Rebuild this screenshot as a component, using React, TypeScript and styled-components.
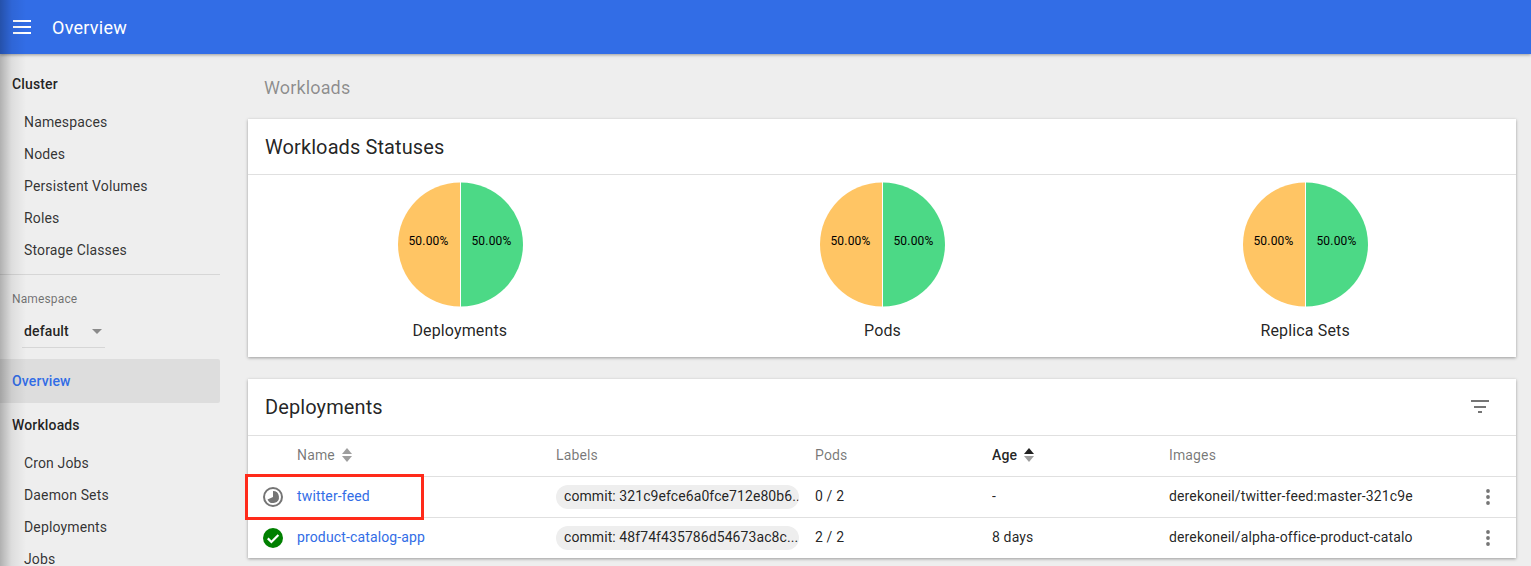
import React from 'react';
import styled, { createGlobalStyle } from 'styled-components';

const GlobalStyle = createGlobalStyle`
  html, body {
    margin: 0;
    height: 566px;
    overflow: hidden;
    background: #eee;
    font-family: Roboto, "Liberation Sans", sans-serif;
    color: rgba(0, 0, 0, 0.87);
    letter-spacing: 0.14px;
  }
`;

const Page = styled.div`
  position: relative;
  width: 1531px;
  height: 566px;
  overflow: hidden;
`;

const EdgeShade = styled.div`
  position: absolute;
  top: 0;
  left: 0;
  bottom: 0;
  width: 26px;
  background: linear-gradient(to right, rgba(0, 0, 0, 0.26), rgba(0, 0, 0, 0.07) 45%, rgba(0, 0, 0, 0));
  z-index: 5;
  pointer-events: none;
`;

const Toolbar = styled.header`
  position: relative;
  z-index: 2;
  height: 54px;
  display: flex;
  align-items: center;
  padding-left: 13px;
  gap: 19px;
  background: #326de6;
  color: #fff;
  box-shadow: 0 1px 3px rgba(0, 0, 0, 0.35);
  box-sizing: border-box;
`;

const ToolbarTitle = styled.div`
  font-size: 18px;
  letter-spacing: 0.25px;
`;

const Body = styled.div`
  display: flex;
`;

const Sidebar = styled.nav`
  width: 220px;
  flex: none;
  padding-top: 19px;
  font-size: 14px;
`;

const Heading = styled.div`
  height: 22px;
  line-height: 22px;
  padding-left: 12px;
  font-weight: 500;
  color: rgba(0, 0, 0, 0.87);
`;

const NavList = styled.div`
  margin-top: 11px;
`;

const NavItem = styled.div`
  height: 32px;
  line-height: 32px;
  padding-left: 24px;
  color: rgba(0, 0, 0, 0.8);
`;

const Divider = styled.div`
  height: 1px;
  margin-top: 8px;
  background: #d6d6d6;
`;

const NamespaceLabel = styled.div`
  margin-top: 17px;
  padding-left: 12px;
  height: 14px;
  line-height: 14px;
  font-size: 12px;
  color: rgba(0, 0, 0, 0.54);
`;

const NamespaceSelect = styled.div`
  margin: 9px 0 0 22px;
  width: 83px;
  height: 33px;
  display: flex;
  align-items: center;
  justify-content: space-between;
  padding: 0 2px;
  box-sizing: border-box;
  border-bottom: 1px solid #d6d6d6;
  font-weight: 500;
  font-size: 14px;
`;

const Caret = styled.span`
  width: 0;
  height: 0;
  margin-right: 1px;
  border-left: 5px solid transparent;
  border-right: 5px solid transparent;
  border-top: 5px solid #8a8a8a;
`;

const ActiveItem = styled.div`
  margin-top: 11px;
  height: 44px;
  line-height: 44px;
  padding-left: 12px;
  background: #ddd;
  border-radius: 0 2px 2px 0;
  font-weight: 500;
  color: #326de6;
`;

const WorkloadsHeading = styled(Heading)`
  margin-top: 11px;
`;

const Main = styled.main`
  flex: 1;
  padding: 0 15px 0 28px;
  min-width: 0;
`;

const SectionTitle = styled.div`
  height: 65px;
  padding: 23px 0 0 16px;
  box-sizing: border-box;
  font-size: 18px;
  line-height: 22px;
  color: rgba(0, 0, 0, 0.42);
`;

const Card = styled.section`
  background: #fff;
  box-shadow: 0 1px 3px rgba(0, 0, 0, 0.35);
  margin-bottom: 22px;
`;

const CardHeader = styled.div<{ $height: number }>`
  height: ${(p) => p.$height}px;
  display: flex;
  align-items: center;
  justify-content: space-between;
  padding: 0 26px 0 17px;
  box-sizing: border-box;
  border-bottom: 1px solid #e0e0e0;
  font-size: 20px;
  letter-spacing: 0.1px;
`;

const Charts = styled.div`
  height: 182px;
  display: grid;
  grid-template-columns: repeat(3, 1fr);
`;

const Chart = styled.div`
  display: flex;
  flex-direction: column;
  align-items: center;
  padding: 7px 0 0 2px;
`;

const PieLabel = styled.div`
  margin: 13px 1px 0 0;
  font-size: 16px;
  line-height: 19px;
`;

const PieText = styled.text`
  font-size: 12px;
  letter-spacing: 0.2px;
  fill: #000;
  text-anchor: middle;
  dominant-baseline: middle;
`;

const Row = styled.div`
  display: grid;
  grid-template-columns: 49px 259px 259px 177px 177px 1fr 46px;
  align-items: center;
  height: 41px;
  box-sizing: border-box;
  font-size: 14px;
  border-bottom: 1px solid #e0e0e0;
  &:last-child {
    border-bottom: 0;
    height: 40px;
  }
`;

const HeadCell = styled.div<{ $sorted?: boolean }>`
  display: flex;
  align-items: center;
  gap: 7px;
  margin-top: -2px;
  font-size: 14px;
  font-weight: ${(p) => (p.$sorted ? 500 : 400)};
  color: ${(p) => (p.$sorted ? 'rgba(0, 0, 0, 0.87)' : 'rgba(0, 0, 0, 0.54)')};
`;

const IconCell = styled.div`
  display: flex;
  justify-content: center;
  padding-left: 1px;
`;

const LinkCell = styled.a`
  margin-top: -2px;
  color: #326de6;
  text-decoration: none;
`;

const Cell = styled.div`
  margin-top: -2px;
  color: rgba(0, 0, 0, 0.87);
  white-space: nowrap;
  overflow: hidden;
`;

const Chip = styled.span`
  justify-self: start;
  width: 243px;
  height: 24px;
  line-height: 23px;
  padding: 0 0 0 8px;
  box-sizing: border-box;
  background: #eee;
  border-radius: 12px;
  font-size: 14px;
  letter-spacing: 0.08px;
  white-space: nowrap;
  overflow: hidden;
`;

const MenuCell = styled.div`
  display: flex;
  padding-left: 16px;
`;

const Highlight = styled.div`
  position: absolute;
  left: 245px;
  top: 474px;
  width: 179px;
  height: 46px;
  box-sizing: border-box;
  border: 3px solid #ff2a1a;
  pointer-events: none;
`;

const MenuIcon = () => (
  <svg width="20" height="14" viewBox="0 0 20 14" fill="#fff">
    <rect x="0" y="0" width="18" height="2" />
    <rect x="0" y="6" width="18" height="2" />
    <rect x="0" y="12" width="18" height="2" />
  </svg>
);

const FilterIcon = () => (
  <svg width="20" height="14" viewBox="0 0 20 14" fill="#757575">
    <rect x="1" y="0" width="18" height="2" />
    <rect x="4" y="6" width="12" height="2" />
    <rect x="8" y="11" width="4" height="2" />
  </svg>
);

const SortIcon = ({ up }: { up?: boolean }) => (
  <svg width="10" height="14" viewBox="0 0 10 14">
    <path d="M5 0 L10 6 H0 Z" fill={up ? '#212121' : '#9e9e9e'} />
    <path d="M5 14 L0 8 H10 Z" fill="#9e9e9e" />
  </svg>
);

const DotsIcon = () => (
  <svg width="4" height="16" viewBox="0 0 4 16" fill="#757575">
    <circle cx="2" cy="2" r="1.9" />
    <circle cx="2" cy="8" r="1.9" />
    <circle cx="2" cy="14" r="1.9" />
  </svg>
);

const PendingIcon = () => (
  <svg width="20" height="20" viewBox="0 0 20 20">
    <circle cx="10" cy="10" r="9" fill="#fff" stroke="#757575" strokeWidth="2" />
    <path d="M10 4 A6 6 0 1 1 4.5 12.5 L10 10 Z" fill="#757575" />
  </svg>
);

const SuccessIcon = () => (
  <svg width="20" height="20" viewBox="0 0 20 20">
    <circle cx="10" cy="10" r="10" fill="#008000" />
    <path d="M4.8 10.4 L8.4 14 L15.4 7" fill="none" stroke="#fff" strokeWidth="2.2" />
  </svg>
);

const Pie = () => (
  <svg width="125" height="126" viewBox="0 0 125 126">
    <path d="M62 0.5 A62 62 0 0 0 62 124.5 Z" fill="#ffc564" />
    <path d="M63 0.5 A62 62 0 0 1 63 124.5 Z" fill="#4cd986" />
    <PieText x="30.5" y="60">
      50.00%
    </PieText>
    <PieText x="93.5" y="60">
      50.00%
    </PieText>
  </svg>
);

const clusterItems = ['Namespaces', 'Nodes', 'Persistent Volumes', 'Roles', 'Storage Classes'];
const workloadItems = ['Cron Jobs', 'Daemon Sets', 'Deployments', 'Jobs'];
const charts = ['Deployments', 'Pods', 'Replica Sets'];

const rows = [
  {
    name: 'twitter-feed',
    icon: <PendingIcon />,
    label: 'commit: 321c9efce6a0fce712e80b6..',
    pods: '0 / 2',
    age: '-',
    image: 'derekoneil/twitter-feed:master-321c9e',
  },
  {
    name: 'product-catalog-app',
    icon: <SuccessIcon />,
    label: 'commit: 48f74f435786d54673ac8c...',
    pods: '2 / 2',
    age: '8 days',
    image: 'derekoneil/alpha-office-product-catalo',
  },
];

export default function App() {
  return (
    <Page>
      <GlobalStyle />
      <EdgeShade />
      <Toolbar>
        <MenuIcon />
        <ToolbarTitle>Overview</ToolbarTitle>
      </Toolbar>
      <Body>
        <Sidebar>
          <Heading>Cluster</Heading>
          <NavList>
            {clusterItems.map((item) => (
              <NavItem key={item}>{item}</NavItem>
            ))}
          </NavList>
          <Divider />
          <NamespaceLabel>Namespace</NamespaceLabel>
          <NamespaceSelect>
            default
            <Caret />
          </NamespaceSelect>
          <ActiveItem>Overview</ActiveItem>
          <WorkloadsHeading>Workloads</WorkloadsHeading>
          <NavList>
            {workloadItems.map((item) => (
              <NavItem key={item}>{item}</NavItem>
            ))}
          </NavList>
        </Sidebar>
        <Main>
          <SectionTitle>Workloads</SectionTitle>
          <Card>
            <CardHeader $height={56}>Workloads Statuses</CardHeader>
            <Charts>
              {charts.map((chart) => (
                <Chart key={chart}>
                  <Pie />
                  <PieLabel>{chart}</PieLabel>
                </Chart>
              ))}
            </Charts>
          </Card>
          <Card>
            <CardHeader $height={57}>
              Deployments
              <FilterIcon />
            </CardHeader>
            <Row>
              <span />
              <HeadCell>
                Name <SortIcon />
              </HeadCell>
              <HeadCell>Labels</HeadCell>
              <HeadCell>Pods</HeadCell>
              <HeadCell $sorted>
                Age <SortIcon up />
              </HeadCell>
              <HeadCell>Images</HeadCell>
              <span />
            </Row>
            {rows.map((row) => (
              <Row key={row.name}>
                <IconCell>{row.icon}</IconCell>
                <LinkCell href="#">{row.name}</LinkCell>
                <Chip>{row.label}</Chip>
                <Cell>{row.pods}</Cell>
                <Cell>{row.age}</Cell>
                <Cell>{row.image}</Cell>
                <MenuCell>
                  <DotsIcon />
                </MenuCell>
              </Row>
            ))}
          </Card>
        </Main>
      </Body>
      <Highlight />
    </Page>
  );
}
